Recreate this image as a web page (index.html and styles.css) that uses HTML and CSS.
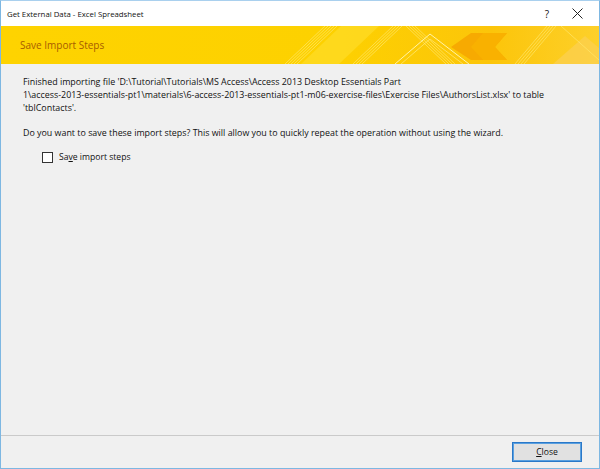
FILE: index.html
```html
<!DOCTYPE html>
<html lang="en">
<head>
  <meta charset="UTF-8">
  <title>Get External Data - Excel Spreadsheet</title>
  <link rel="stylesheet" href="styles.css">
</head>
<body>

  <div class="window">
    <div class="titlebar">
      <span class="title">Get External Data - Excel Spreadsheet</span>
      <div class="controls">
        <span class="help">?</span>
        <svg class="close-x" width="11" height="11" viewBox="0 0 11 11">
          <path d="M0.5 0.5 L10.5 10.5 M10.5 0.5 L0.5 10.5" stroke="#222" stroke-width="1" fill="none"/>
        </svg>
      </div>
    </div>

    <div class="banner">
      <svg class="banner-art" viewBox="0 0 598 38" preserveAspectRatio="none">
        <polygon points="300,38 340,0 378,0 338,38" fill="#ffe033" opacity="0.55"/>
        <g stroke="#ffe66a" stroke-width="0.7" fill="none">
          <path d="M284 38 L324 0 M287 38 L327 0 M290 38 L330 0 M293 38 L333 0 M296 38 L336 0"/>
          <path d="M352 38 L392 0 M355 38 L395 0 M358 38 L398 0 M361 38 L401 0"/>
          <path d="M405 0 L445 38 M408 0 L448 38 M411 0 L451 38 M414 0 L454 38"/>
          <path d="M514 38 L546 0 M517 38 L549 0 M520 38 L552 0 M523 38 L555 0"/>
        </g>
        <polygon points="450,21 470,7 506,7 494,21 506,34 470,34" fill="#f6a500" opacity="0.85"/>
        <polygon points="482,7 506,7 494,21 506,34 482,34 470,21" fill="#f9b400" opacity="0.7"/>
        <polyline points="394,38 429,8 468,38" stroke="#fff3a8" stroke-width="1" fill="none"/>
        <polyline points="400,38 429,13 462,38" stroke="#ffeb80" stroke-width="0.7" fill="none"/>
        <polygon points="552,38 584,10 598,22 598,38" fill="#fbcf4e" opacity="0.8"/>
        <path d="M560 0 L598 34" stroke="#ffe66a" stroke-width="0.7"/>
      </svg>
      <h1 class="banner-title">Save Import Steps</h1>
    </div>

    <div class="content">
      <p class="message">Finished importing file 'D:\Tutorial\Tutorials\MS Access\Access 2013 Desktop Essentials Part<br>1\access-2013-essentials-pt1\materials\6-access-2013-essentials-pt1-m06-exercise-files\Exercise Files\AuthorsList.xlsx' to table 'tblContacts'.</p>
      <p class="question">Do you want to save these import steps? This will allow you to quickly repeat the operation without using the wizard.</p>
      <label class="check">
        <span class="box"></span>
        <span>Sa<u>v</u>e import steps</span>
      </label>
    </div>

    <div class="footer">
      <button type="button" class="btn"><u>C</u>lose</button>
    </div>
  </div>

</body>
</html>
```

FILE: styles.css
```css
* {
  box-sizing: border-box;
}

body {
  margin: 0;
  padding: 0;
  font-family: 'Open Sans', 'Noto Sans', sans-serif;
  color: #111;
}

.window {
  width: 600px;
  height: 469px;
  border: 1px solid #7db7e2;
  border-top-color: #a9d0ee;
  background-color: #f0f0f0;
  display: flex;
  flex-direction: column;
}

.titlebar {
  height: 25px;
  background-color: #fff;
  display: flex;
  align-items: center;
  justify-content: space-between;
  padding: 0 16px 0 6px;
  font-size: 7.8px;
}

.controls {
  display: flex;
  align-items: center;
  gap: 23px;
}

.help {
  font-size: 10px;
}

.banner {
  position: relative;
  height: 38px;
  background: linear-gradient(to right, #fed300 0%, #fdd100 55%, #fcc50a 82%, #fdd02a 100%);
  display: flex;
  align-items: center;
  padding-left: 19px;
  overflow: hidden;
}

.banner-art {
  position: absolute;
  left: 0;
  top: 0;
  width: 100%;
  height: 100%;
}

.banner-title {
  position: relative;
  margin: 0;
  font-size: 10px;
  font-weight: normal;
  color: #a85c00;
}

.content {
  flex: 1;
  padding: 11px 36px 0 22px;
  font-size: 8.9px;
  line-height: 13px;
}

.message {
  margin: 0 0 12px;
}

.question {
  margin: 0 0 12px;
}

.check {
  display: flex;
  align-items: center;
  gap: 6px;
  margin-left: 19px;
  font-size: 8.6px;
}

.box {
  width: 11px;
  height: 11px;
  border: 1px solid #333;
  background-color: #fff;
}

.footer {
  height: 33px;
  border-top: 1px solid #cacaca;
  display: flex;
  align-items: center;
  justify-content: flex-end;
  padding-right: 17px;
}

.btn {
  width: 70px;
  height: 20px;
  border: 1px solid #2a78c8;
  box-shadow: inset 0 0 0 1px #5aa0e0;
  background-color: #e1e1e1;
  font-family: 'Open Sans', 'Noto Sans', sans-serif;
  font-size: 8.6px;
  color: #111;
  padding: 0;
}
```
